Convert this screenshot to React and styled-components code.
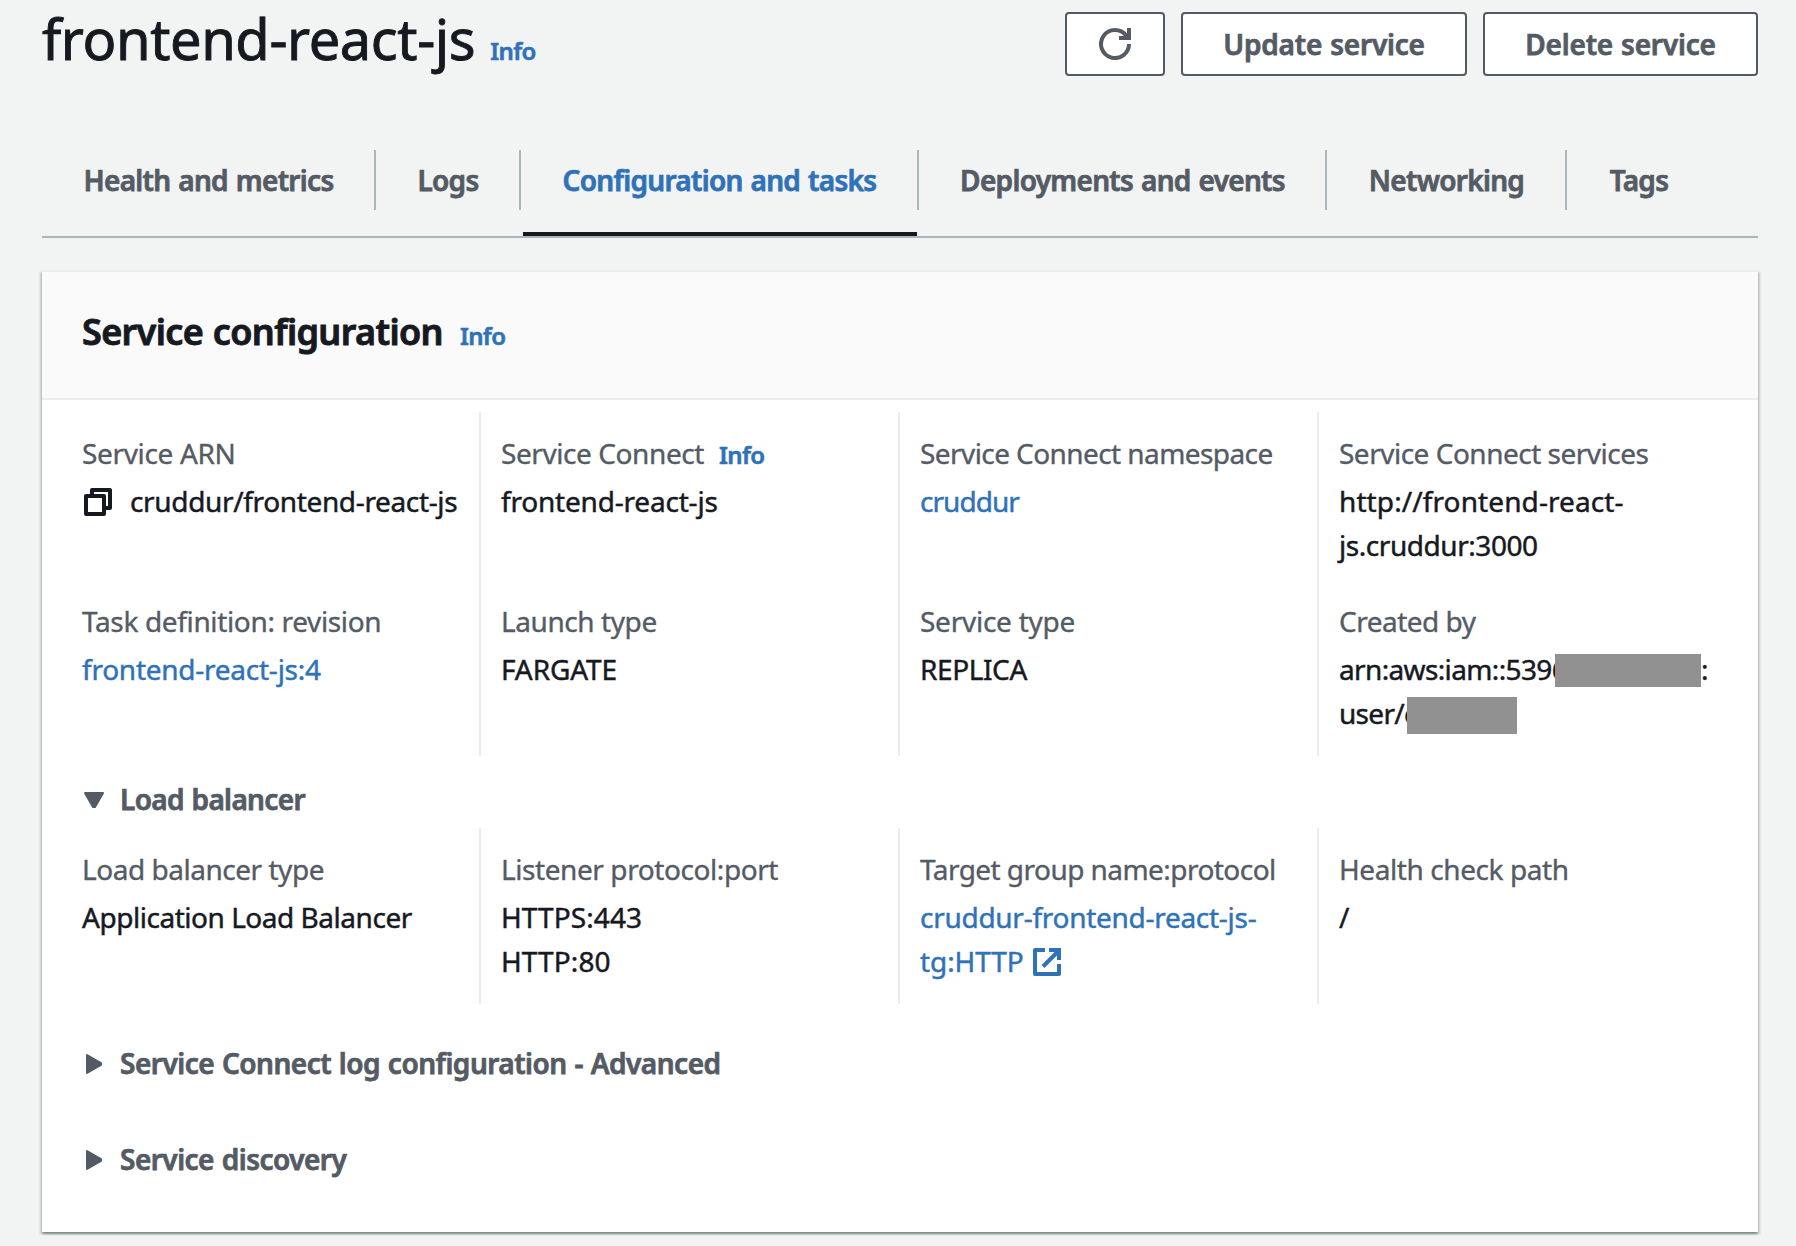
import React from "react";
import styled, { createGlobalStyle } from "styled-components";

const ink = "#16191f";
const slate = "#545b64";
const link = "#3072b8";
const rule = "#eaeded";
const line = "#aab7b8";

const GlobalStyle = createGlobalStyle`
  * { box-sizing: border-box; }
  body {
    margin: 0;
    background: #f2f3f3;
    color: ${ink};
    font-family: "Noto Sans", "Open Sans", sans-serif;
    font-size: 28px;
    line-height: 44px;
    -webkit-text-stroke: 0.35px currentColor;
  }
`;

const Page = styled.main`
  height: 1246px;
  padding: 0 38px 0 42px;
  overflow: hidden;
`;

const PageHeader = styled.header`
  display: flex;
  justify-content: space-between;
  height: 76px;
`;

const TitleGroup = styled.div`
  display: flex;
  align-items: baseline;
  padding-top: 6px;
`;

const Title = styled.h1`
  margin: 0;
  font-size: 56px;
  font-weight: 400;
  line-height: 64px;
  letter-spacing: -0.4px;
  -webkit-text-stroke-width: 0.9px;
`;

const InfoLink = styled.a`
  margin-left: ${(p) => p.$gap}px;
  color: ${link};
  font-size: 24px;
  font-weight: 600;
  letter-spacing: -0.6px;
  -webkit-text-stroke: 0.6px currentColor;
`;

const Actions = styled.div`
  display: flex;
  gap: 16px;
  padding-top: 12px;
`;

const Button = styled.button`
  display: flex;
  align-items: center;
  justify-content: center;
  width: ${(p) => p.$width}px;
  height: 64px;
  padding: 0;
  border: 2px solid ${slate};
  border-radius: 4px;
  background: #fff;
  color: ${slate};
  font: inherit;
  font-weight: 600;
  letter-spacing: -0.2px;
  word-spacing: 1px;
  -webkit-text-stroke: 0.75px currentColor;
`;

const TabList = styled.nav`
  display: flex;
  height: 88px;
  margin-top: 74px;
  border-bottom: 2px solid ${line};
`;

const Tab = styled.div`
  width: ${(p) => p.$width}px;
`;

const TabLabel = styled.div`
  height: 60px;
  padding-left: 1px;
  border-right: ${(p) => (p.$last ? 0 : 2)}px solid ${line};
  color: ${(p) => (p.$active ? link : slate)};
  font-weight: 600;
  line-height: 60px;
  text-align: center;
  letter-spacing: -0.7px;
  word-spacing: 1.3px;
  white-space: nowrap;
  -webkit-text-stroke: 0.75px currentColor;
`;

const TabMarker = styled.div`
  height: 4px;
  margin: 22px 2px 0;
  background: ${ink};
`;

const Card = styled.section`
  height: 962px;
  margin-top: 32px;
  border-top: 2px solid ${rule};
  background: #fff;
  box-shadow: 0 2px 2px 0 rgba(0, 28, 36, 0.3), 2px 2px 2px 0 rgba(0, 28, 36, 0.15),
    -2px 2px 2px 0 rgba(0, 28, 36, 0.15);
`;

const CardHeader = styled.div`
  display: flex;
  align-items: baseline;
  height: 128px;
  padding: 38px 40px 0;
  border-bottom: 2px solid ${rule};
  background: #fafafa;
`;

const CardTitle = styled.h2`
  margin: 0;
  font-size: 36px;
  font-weight: 600;
  line-height: 44px;
  letter-spacing: -0.63px;
  word-spacing: 1px;
  -webkit-text-stroke-width: 0.9px;
`;

const Columns = styled.div`
  display: grid;
  grid-template-columns: 439px 419px 419px 439px;
  margin-top: ${(p) => p.$top}px;
`;

const Column = styled.div`
  display: flex;
  flex-direction: column;
  gap: 32px;
  padding: 19px 0 21px 20px;
  border-right: 2px solid ${rule};
  &:first-child { padding-left: 40px; }
  &:last-child { border-right: 0; }
`;

const Field = styled.div`
  height: 136px;
  white-space: nowrap;
`;

const FieldLabel = styled.div`
  display: flex;
  align-items: baseline;
  height: 44px;
  margin-bottom: 4px;
  color: ${slate};
  letter-spacing: ${(p) => p.$track ?? -0.42}px;
  -webkit-text-stroke: 0.35px currentColor;
`;

const Value = styled.div`
  display: flex;
  align-items: center;
  height: 44px;
  color: ${(p) => (p.$link ? link : ink)};
  letter-spacing: ${(p) => p.$track ?? -0.3}px;
  -webkit-text-stroke: 0.45px currentColor;
`;

const Redaction = styled.span`
  width: ${(p) => p.$width}px;
  height: ${(p) => p.$height}px;
  margin: ${(p) => p.$top}px 0 0 ${(p) => p.$overlap}px;
  background: #919191;
  z-index: 1;
`;

const Expander = styled.div`
  display: flex;
  align-items: center;
  height: 44px;
  margin-top: ${(p) => p.$top}px;
  padding-left: 40px;
  color: ${slate};
  font-weight: 600;
  letter-spacing: ${(p) => p.$track}px;
  word-spacing: 1px;
  -webkit-text-stroke: 0.75px currentColor;
`;

const Icon = styled.svg`
  flex: none;
  width: ${(p) => p.$w ?? 32}px;
  height: 32px;
  margin: ${(p) => p.$m ?? "0"};
  fill: none;
  stroke: currentColor;
  stroke-width: ${(p) => p.$stroke ?? 4};
`;

const RefreshIcon = () => (
  <Icon viewBox="0 0 32 32">
    <path d="M30 16A14 14 0 1 1 27.2 7.6L29 10" />
    <path d="M30 0v10H20" />
  </Icon>
);

const CopyIcon = () => (
  <Icon viewBox="0 0 32 32" $m="2px 16px 0 0" strokeLinejoin="round">
    <rect x="4" y="10" width="18" height="18" />
    <path d="M10 9V4h18v18h-5" />
  </Icon>
);

const ExternalIcon = () => (
  <Icon viewBox="0 0 32 32" $m="2px 0 0 7px">
    <path d="M14 4H4v24h24V18" strokeLinejoin="round" />
    <path d="M18 4h10v10M12 20.5L28 4.500" />
  </Icon>
);

const Caret = ({ open }) => (
  <Icon viewBox="0 0 38 32" $w={38} $stroke={2} $m="1px 0 0" strokeLinejoin="round">
    <path fill="currentColor" d={open ? "M3 9h18l-8 14h-2z" : "M5 7v18l14-8v-2z"} />
  </Icon>
);

const tabs = [
  { label: "Health and metrics", width: 334 },
  { label: "Logs", width: 145 },
  { label: "Configuration and tasks", width: 398, active: true },
  { label: "Deployments and events", width: 408 },
  { label: "Networking", width: 240 },
  { label: "Tags", width: 143 },
];

export default function App() {
  return (
    <Page>
      <GlobalStyle />
      <PageHeader>
        <TitleGroup>
          <Title>frontend-react-js</Title>
          <InfoLink $gap={15}>Info</InfoLink>
        </TitleGroup>
        <Actions>
          <Button $width={100} aria-label="Refresh"><RefreshIcon /></Button>
          <Button $width={286}>Update service</Button>
          <Button $width={275}>Delete service</Button>
        </Actions>
      </PageHeader>

      <TabList>
        {tabs.map((t, i) => (
          <Tab key={t.label} $width={t.width}>
            <TabLabel $active={t.active} $last={i === tabs.length - 1}>{t.label}</TabLabel>
            {t.active && <TabMarker />}
          </Tab>
        ))}
      </TabList>

      <Card>
        <CardHeader>
          <CardTitle>Service configuration</CardTitle>
          <InfoLink $gap={17}>Info</InfoLink>
        </CardHeader>

        <Columns $top={12}>
          <Column>
            <Field>
              <FieldLabel $track={-0.35}>Service ARN</FieldLabel>
              <Value $track={-0.35}><CopyIcon />cruddur/frontend-react-js</Value>
            </Field>
            <Field>
              <FieldLabel $track={-0.35}>Task definition: revision</FieldLabel>
              <Value $link $track={-0.25}>frontend-react-js:4</Value>
            </Field>
          </Column>
          <Column>
            <Field>
              <FieldLabel>Service Connect<InfoLink $gap={15}>Info</InfoLink></FieldLabel>
              <Value $track={-0.2}>frontend-react-js</Value>
            </Field>
            <Field>
              <FieldLabel>Launch type</FieldLabel>
              <Value $track={-0.1}>FARGATE</Value>
            </Field>
          </Column>
          <Column>
            <Field>
              <FieldLabel $track={-0.58}>Service Connect namespace</FieldLabel>
              <Value $link $track={-0.95}>cruddur</Value>
            </Field>
            <Field>
              <FieldLabel $track={-0.25}>Service type</FieldLabel>
              <Value $track={-0.4}>REPLICA</Value>
            </Field>
          </Column>
          <Column>
            <Field>
              <FieldLabel $track={-0.5}>Service Connect services</FieldLabel>
              <Value $track={0.1}>http://frontend-react-</Value>
              <Value $track={-0.45}>js.cruddur:3000</Value>
            </Field>
            <Field>
              <FieldLabel $track={-0.5}>Created by</FieldLabel>
              <Value $track={-0.64}>
                arn:aws:iam::5396<Redaction $width={146} $height={33} $top={2} $overlap={-12} />:
              </Value>
              <Value $track={-0.7}>
                user/c<Redaction $width={110} $height={37} $top={4} $overlap={-10} />
              </Value>
            </Field>
          </Column>
        </Columns>

        <Expander $top={21} $track={-0.65}><Caret open />Load balancer</Expander>

        <Columns $top={7}>
          <Column>
            <Field>
              <FieldLabel $track={-0.47}>Load balancer type</FieldLabel>
              <Value $track={-0.47}>Application Load Balancer</Value>
            </Field>
          </Column>
          <Column>
            <Field>
              <FieldLabel>Listener protocol:port</FieldLabel>
              <Value $track={0.1}>HTTPS:443</Value>
              <Value $track={0.1}>HTTP:80</Value>
            </Field>
          </Column>
          <Column>
            <Field>
              <FieldLabel $track={-0.55}>Target group name:protocol</FieldLabel>
              <Value $link $track={-0.28}>cruddur-frontend-react-js-</Value>
              <Value $link $track={-0.1}>tg:HTTP<ExternalIcon /></Value>
            </Field>
          </Column>
          <Column>
            <Field>
              <FieldLabel>Health check path</FieldLabel>
              <Value>/</Value>
            </Field>
          </Column>
        </Columns>

        <Expander $top={37} $track={-0.5}><Caret />Service Connect log configuration - Advanced</Expander>
        <Expander $top={52} $track={-0.52}><Caret />Service discovery</Expander>
      </Card>
    </Page>
  );
}
